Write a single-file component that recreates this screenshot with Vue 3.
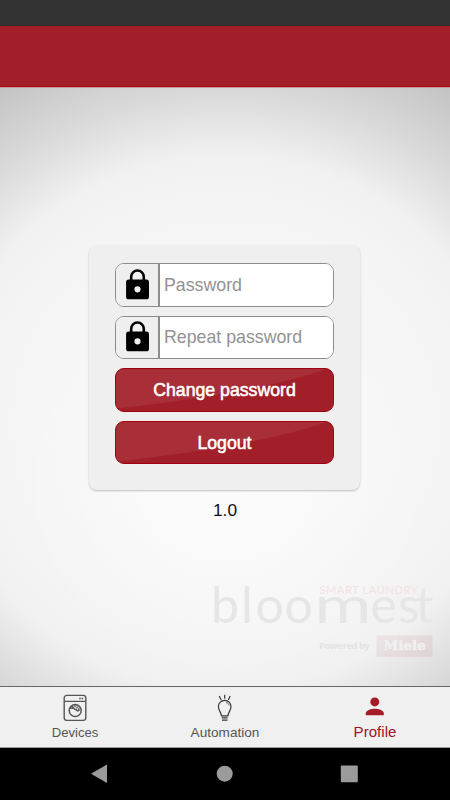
<script setup>
const fields = ['Password', 'Repeat password']
const actions = ['Change password', 'Logout']
</script>

<template>
  <div class="screen">
    <div class="status"></div>
    <header class="header"></header>
    <main class="content">
      <section class="card">
        <label v-for="field in fields" :key="field" class="field">
          <span class="lock">
            <svg width="24" height="31" viewBox="0 0 24 31">
              <path d="M5.2 12V7a6.3 6.3 0 0 1 12.6 0V12" transform="translate(0 .8)" fill="none" stroke="#000" stroke-width="2.6" />
              <path fill-rule="evenodd" d="M2.7 10.4h17.7a2.6 2.6 0 0 1 2.6 2.6v14.7a2.6 2.6 0 0 1-2.6 2.6H2.7A2.6 2.6 0 0 1 .1 27.7V13a2.6 2.6 0 0 1 2.6-2.6zM11.5 17.2a3.1 3.1 0 1 0 0 6.2 3.1 3.1 0 0 0 0-6.2z" />
            </svg>
          </span>
          <input type="text" :placeholder="field" />
        </label>
        <button v-for="action in actions" :key="action" class="action">
          <svg class="gloss" viewBox="0 0 219 44" preserveAspectRatio="none">
            <path d="M0 0H212Q150 24 0 42Z" fill="#fff" fill-opacity=".07" />
          </svg>
          <span>{{ action }}</span>
        </button>
      </section>
      <p class="version">1.0</p>
      <svg class="brand" width="222" height="78" viewBox="0 0 222 78">
        <text class="wordmark" y="40.5"><tspan x="0 30 44.5 73.5">bloo</tspan><tspan x="103.5" textLength="57" lengthAdjust="spacingAndGlyphs">m</tspan><tspan x="159.5 187 204.5">est</tspan></text>
        <text class="tagline" x="108.5" y="11.8" textLength="98">SMART LAUNDRY</text>
        <text class="powered" x="108" y="67" textLength="51">Powered by</text>
        <rect x="165.5" y="53.5" width="56" height="21.5" fill="#a01c28" fill-opacity=".075" />
        <text class="maker" x="172.5" y="68.4" textLength="42" lengthAdjust="spacingAndGlyphs">Miele</text>
      </svg>
    </main>
    <nav class="tabs">
      <a class="tab">
        <svg width="24" height="28" viewBox="0 0 24 28" fill="none" stroke="#555" stroke-width="1.4">
          <rect x="1.2" y="1.4" width="21.6" height="25" rx="2.6" />
          <path d="M1.2 7.4h21.6M16.2 4.5h1.6m.8 0h1.6" />
          <circle cx="12.2" cy="16.6" r="6" stroke-width="1.5" />
          <path d="M6.8 14.8c.8-1.8 2-.2 3.2-.6 1.3-.4 1.2 1.7 2.5 1.3s.9 1.7 2.1 1.4 1-1.2 2.1-.5M8.7 12.2l2 1.7m1.4-3-.2 2.3m1.4 1.2 1.6-1.8m.2 3 1.4-1.1" />
        </svg>
        <span>Devices</span>
      </a>
      <a class="tab automation">
        <svg width="24" height="28" viewBox="0 0 24 28" fill="none" stroke="#333" stroke-width="1.15">
          <path d="M8.4 21.8c-.2-3.6-3-5.5-3-9.2a6.2 6.2 0 0 1 12.6 0c0 3.7-2.8 5.6-3 9.2zM8.8 23.9h5.8M9 26.1h5.5M11.7.8v4M6.2 2l2 4M17.2 2l-1.9 4" />
          <path d="M13.2 8.5c1.7.4 2.6 1.5 2.9 3" stroke-width=".8" />
        </svg>
        <span>Automation</span>
      </a>
      <a class="tab active">
        <svg width="24" height="28" viewBox="0 0 24 28" fill="#a51c28">
          <circle cx="11.8" cy="7.9" r="4.5" />
          <path d="M2.8 21.3v-2.1c0-3.1 5.9-4.5 9-4.5s9 1.4 9 4.5v2.1z" />
        </svg>
        <span>Profile</span>
      </a>
    </nav>
    <footer class="system">
      <svg width="18" height="20" viewBox="0 0 18 20"><path d="M0 9.8 16 .5v18.4z" /></svg>
      <svg width="18" height="20" viewBox="0 0 18 20"><circle cx="9.7" cy="9.7" r="8" /></svg>
      <svg width="18" height="20" viewBox="0 0 18 20"><rect x=".8" y="1.4" width="17" height="16.8" rx="1" /></svg>
    </footer>
  </div>
</template>

<style>
body { margin: 0; }
</style>

<style scoped>
.screen {
  width: 450px;
  height: 800px;
  display: flex;
  flex-direction: column;
  overflow: hidden;
  font-family: "Liberation Sans", Arial, sans-serif;
}
.status {
  height: 26px;
  box-sizing: border-box;
  background: #333;
  border-bottom: 1px solid #2b2d2d;
}
.header {
  height: 61px;
  box-sizing: border-box;
  background: #a21f29;
  border-bottom: 1px solid #a50012;
}
.content {
  position: relative;
  height: 599px;
  box-sizing: border-box;
  padding-top: 157px;
  display: flex;
  flex-direction: column;
  align-items: center;
  border-top: 1px solid #c99a9d;
  background:
    radial-gradient(ellipse 210px 200px at 225px 393px, rgba(255, 255, 255, .55), rgba(255, 255, 255, 0)),
    radial-gradient(ellipse 281px 267px at 225px 335px, #f9f9f9 0%, #f5f5f5 75%, #f1f1f1 100%, #d9d9d9 124%, #c4c4c4 148%);
}
.card {
  width: 271px;
  height: 245px;
  margin-right: 1px;
  box-sizing: border-box;
  padding: 18px 26px 0;
  display: grid;
  grid-template-rows: repeat(4, 43.5px);
  gap: 9px;
  border-radius: 8px;
  background: #efefef;
  box-shadow: 0 1px 2px rgba(0, 0, 0, .23);
}
.field {
  display: flex;
  box-sizing: border-box;
  border: 1px solid #8c8c8c;
  border-radius: 9px;
  overflow: hidden;
  background: #fff;
}
.lock {
  width: 42px;
  box-sizing: content-box;
  display: flex;
  align-items: center;
  justify-content: center;
  padding-bottom: 1px;
  background: #efefef;
  border-right: 2px solid #8e8e8e;
}
.lock svg {
  margin-left: 2px;
}
input {
  flex: 1;
  min-width: 0;
  border: 0;
  padding: 1px 4px 0;
  outline: 0;
  background: #fff;
  font: 17.75px "Liberation Sans", Arial, sans-serif;
}
input::placeholder { color: #929292; }
.action {
  position: relative;
  overflow: hidden;
  padding: 0;
  border: 1px solid #a0000f;
  border-radius: 9px;
  background: #a21f29;
  color: #fff;
  font: 17.7px "Liberation Sans", Arial, sans-serif;
  -webkit-text-stroke: .55px #fff;
}
.action span { position: relative; top: 1px; }
.gloss {
  position: absolute;
  inset: 0;
  width: 100%;
  height: 100%;
}
.version {
  margin: 9px 0 0;
  font-size: 17.3px;
  line-height: 22px;
  color: #111;
}
.brand {
  position: absolute;
  right: 17px;
  bottom: 26px;
  overflow: visible;
}
.wordmark {
  font: 50px Lato, sans-serif;
  fill: #e6e6e6;
}
.tagline {
  font: 11px Lato, sans-serif;
  fill: #f3e2e4;
}
.powered {
  font: bold 9.5px "Open Sans", sans-serif;
  fill: #e3e3e3;
}
.maker {
  font: bold 12px "DejaVu Serif", serif;
  fill: #f1f0f0;
  stroke: #f1f0f0;
  stroke-width: .5px;
}
.tabs {
  height: 62px;
  box-sizing: border-box;
  display: grid;
  grid-template-columns: repeat(3, 1fr);
  background: #f0f0f0;
  border-top: 1px solid #666;
  border-bottom: 1px solid #999;
}
.tab {
  display: flex;
  flex-direction: column;
  align-items: center;
  padding-top: 7px;
  font-size: 13.1px;
  line-height: 21px;
  color: #555;
}
.tab.automation { font-size: 13.6px; }
.tab.active {
  font-size: 15.1px;
  line-height: 20px;
  color: #a5101c;
}
.system {
  height: 52px;
  display: grid;
  grid-template-columns: repeat(3, 124.8px);
  justify-content: center;
  justify-items: center;
  align-items: center;
  padding-right: 1px;
  background: #000;
  fill: #9b9b9b;
}
</style>
